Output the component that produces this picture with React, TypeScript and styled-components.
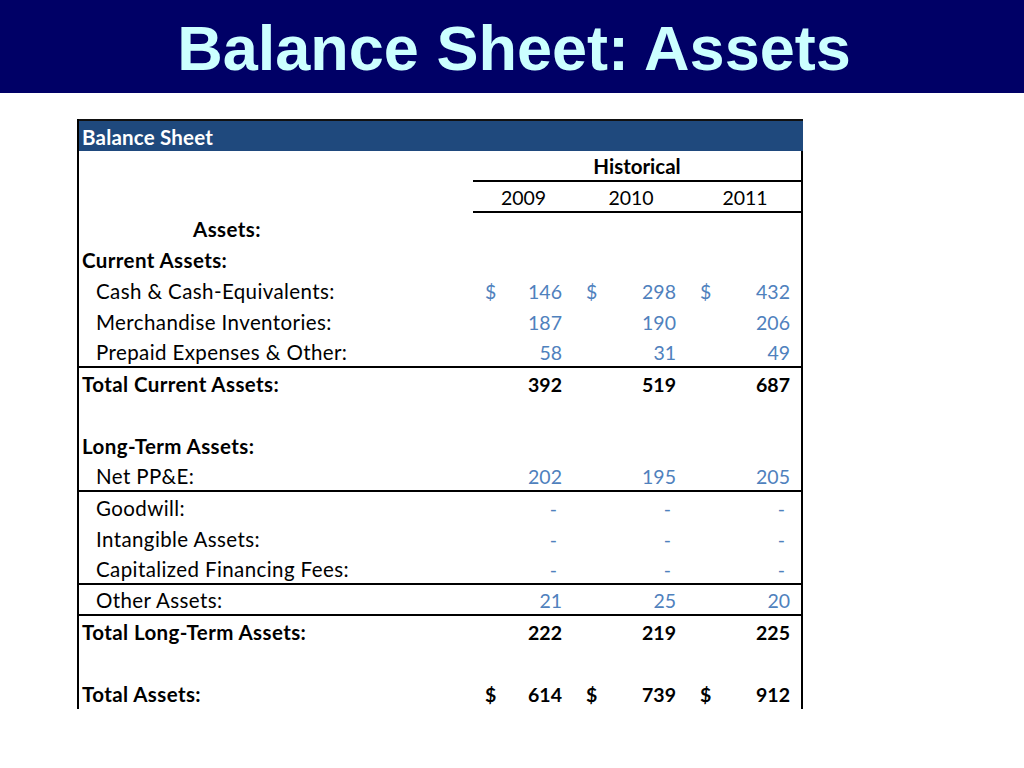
import styled, { createGlobalStyle } from "styled-components";

const GlobalStyle = createGlobalStyle`
    html, body {
        margin: 0;
        padding: 0;
        background: #ffffff;
    }
    body {
        width: 1024px;
        height: 768px;
        overflow: hidden;
    }
`;

const Slide = styled.div`
    display: flex;
    flex-direction: column;
    width: 1024px;
    height: 768px;
`;

const TitleBar = styled.header`
    display: flex;
    justify-content: center;
    align-items: center;
    height: 93px;
    background: #000066;
`;

const Title = styled.h1`
    margin: 0;
    font-family: "Liberation Sans", Arial, sans-serif;
    font-weight: bold;
    font-size: 63px;
    line-height: 1;
    color: #ccffff;
    padding: 3px 0 0 4px;
`;

const Sheet = styled.div`
    margin: 26px 0 0 77px;
    width: 724px;
    border-left: 2px solid #000;
    font-family: Lato, "Liberation Sans", sans-serif;
    font-size: 20.5px;
    color: #000;
`;

const SheetHeader = styled.div`
    display: flex;
    align-items: center;
    height: 32px;
    box-sizing: border-box;
    border-top: 2px solid #111;
    background: #1f497d;
    color: #fff;
    font-weight: bold;
    padding: 1px 0 0 3px;
    letter-spacing: 0.2px;
`;

const Body = styled.div`
    display: flex;
    flex-direction: column;
    border-right: 2px solid #000;
`;

const Row = styled.div<{ $line?: boolean }>`
    display: grid;
    grid-template-columns: 394px 101px 114px 113px;
    height: 31px;
    box-sizing: border-box;
    padding-top: 1px;
    border-bottom: ${(p) => (p.$line ? "2px solid #000" : "none")};
`;

const Label = styled.div<{ $indent?: number; $bold?: boolean }>`
    display: flex;
    align-items: center;
    padding-left: ${(p) => 3 + (p.$indent ?? 0)}px;
    font-weight: ${(p) => (p.$bold ? "bold" : "normal")};
    letter-spacing: 0.4px;
    white-space: nowrap;
`;

const Cell = styled.div<{ $bold?: boolean; $under?: boolean; $center?: boolean }>`
    display: flex;
    align-items: center;
    justify-content: ${(p) => (p.$center ? "center" : "space-between")};
    padding: 0 12px;
    box-sizing: border-box;
    font-size: 19.5px;
    font-weight: ${(p) => (p.$bold ? "bold" : "normal")};
    color: ${(p) => (p.$bold ? "#000" : "#4f81bd")};
    border-bottom: ${(p) => (p.$under ? "2px solid #000" : "none")};

    &:last-child {
        padding-right: 11px;
    }
`;

const YearCell = styled(Cell)`
    color: #000;
`;

const Span = styled.div`
    grid-column: 2 / span 3;
    display: flex;
    align-items: center;
    justify-content: center;
    font-weight: bold;
    border-bottom: 2px solid #000;
`;

const Dash = styled.span`
    padding-right: 5px;
`;

type Line = {
    label: string;
    indent?: number;
    bold?: boolean;
    values?: (number | null)[];
    dollar?: boolean;
    total?: boolean;
    line?: boolean;
};

const lines: Line[] = [
    { label: "Assets:", bold: true, indent: 111 },
    { label: "Current Assets:", bold: true },
    { label: "Cash & Cash-Equivalents:", indent: 14, values: [146, 298, 432], dollar: true },
    { label: "Merchandise Inventories:", indent: 14, values: [187, 190, 206] },
    { label: "Prepaid Expenses & Other:", indent: 14, values: [58, 31, 49], line: true },
    { label: "Total Current Assets:", bold: true, values: [392, 519, 687], total: true },
    { label: "" },
    { label: "Long-Term Assets:", bold: true },
    { label: "Net PP&E:", indent: 14, values: [202, 195, 205], line: true },
    { label: "Goodwill:", indent: 14, values: [null, null, null] },
    { label: "Intangible Assets:", indent: 14, values: [null, null, null] },
    { label: "Capitalized Financing Fees:", indent: 14, values: [null, null, null], line: true },
    { label: "Other Assets:", indent: 14, values: [21, 25, 20], line: true },
    { label: "Total Long-Term Assets:", bold: true, values: [222, 219, 225], total: true },
    { label: "" },
    { label: "Total Assets:", bold: true, values: [614, 739, 912], dollar: true, total: true },
];

const App = () => {
    return (
        <Slide>
            <GlobalStyle />
            <TitleBar>
                <Title>Balance Sheet: Assets</Title>
            </TitleBar>
            <Sheet>
                <SheetHeader>Balance Sheet</SheetHeader>
                <Body>
                    <Row>
                        <Label />
                        <Span>Historical</Span>
                    </Row>
                    <Row>
                        <Label />
                        {["2009", "2010", "2011"].map((y) => (
                            <YearCell key={y} $center $under>{y}</YearCell>
                        ))}
                    </Row>
                    {lines.map((l, i) => (
                        <Row key={i} $line={l.line}>
                            <Label $indent={l.indent} $bold={l.bold}>{l.label}</Label>
                            {(l.values ?? [undefined, undefined, undefined]).map((v, j) => (
                                <Cell key={j} $bold={l.total}>
                                    <span>{l.dollar ? "$" : ""}</span>
                                    {v === null ? <Dash>-</Dash> : <span>{v ?? ""}</span>}
                                </Cell>
                            ))}
                        </Row>
                    ))}
                </Body>
            </Sheet>
        </Slide>
    );
};

export default App;
